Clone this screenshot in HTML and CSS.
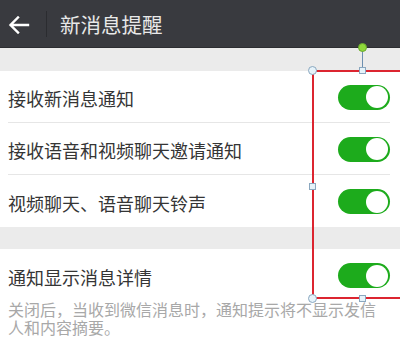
FILE: index.html
```html
<!DOCTYPE html>
<html lang="zh">
<head>
<meta charset="utf-8">
<link rel="stylesheet" href="styles.css">
</head>
<body>
<div class="page">
  <header class="topbar">
    <svg class="back" width="22" height="18" viewBox="0 0 22 18"><path d="M20 9H3M10 1.5L2.5 9l7.5 7.5" fill="none" stroke="#fff" stroke-width="2.4" stroke-linecap="square"/></svg>
    <span class="divider"></span>
    <span class="title">新消息提醒</span>
  </header>
  <div class="gap gap1"></div>
  <section class="group">
    <div class="row"><span class="label">接收新消息通知</span><span class="switch"><span class="knob"></span></span></div>
    <div class="row"><span class="label">接收语音和视频聊天邀请通知</span><span class="switch"><span class="knob"></span></span></div>
    <div class="row"><span class="label">视频聊天、语音聊天铃声</span><span class="switch"><span class="knob"></span></span></div>
  </section>
  <div class="gap gap2"></div>
  <section class="group">
    <div class="row"><span class="label">通知显示消息详情</span><span class="switch"><span class="knob"></span></span></div>
  </section>
  <p class="desc">关闭后，当收到微信消息时，通知提示将不显示发信人和内容摘要。</p>

  <div class="selection">
    <span class="rotate-line"></span>
    <span class="rotate"></span>
    <span class="h circle tl"></span>
    <span class="h circle bl"></span>
    <span class="h square tm"></span>
    <span class="h square bm"></span>
    <span class="h square ml"></span>
  </div>
</div>
</body>
</html>
```
FILE: styles.css
```css
html, body { margin: 0; padding: 0; }
body {
  width: 400px; height: 341px; overflow: hidden;
  background: #fff;
  font-family: "Noto Sans CJK SC", "Noto Sans", sans-serif;
}
.page { position: relative; width: 400px; height: 341px; overflow: hidden; }
.topbar {
  height: 48px; background: #393a3f;
  display: flex; align-items: center;
  border-bottom: 1px solid #2c2d31;
  box-sizing: border-box;
}
.back { margin-left: 8px; margin-top: 2px; }
.divider {
  width: 1px; height: 26px; background: #2b2c30;
  margin-left: 16px;
}
.title {
  margin-left: 13px; color: #e8e8e8; font-size: 20.5px; line-height: 1;
  margin-top: 1px;
}
.gap { background: #ebebeb; }
.gap1 { height: 23px; }
.gap2 { height: 22px; }
.group { background: #fff; }
.row {
  height: 52px; display: flex; align-items: center; justify-content: space-between;
  margin-left: 8px; margin-right: 10px;
  border-bottom: 1px solid #e6e6e6; box-sizing: border-box;
}
.group .row:last-child { border-bottom: none; }
.label { font-size: 18px; color: #353535; line-height: 1; margin-top: 3px; }
.switch {
  width: 52px; height: 25px; border-radius: 13px; background: #1dab1c;
  display: flex; align-items: center; justify-content: flex-end;
  padding-right: 2px; box-sizing: border-box; margin-top: 1px;
}
.knob { width: 22px; height: 22px; border-radius: 50%; background: #fff; }
.desc {
  margin: 0; padding: 0 8px; font-size: 16px; line-height: 17.5px; color: #a8a8a8;
  width: 380px;
}

.selection {
  position: absolute; left: 313px; top: 71px; width: 120px; height: 229px;
  border: 2px solid #dc2530; box-sizing: border-box;
  margin-left: -1px; margin-top: -1px;
}
.h { position: absolute; box-sizing: border-box; background: #e6f3fa; border: 1px solid #8aa7bf; }
.circle { width: 9px; height: 9px; border-radius: 50%; }
.square { width: 7px; height: 7px; }
.tl { left: -6px; top: -6px; }
.bl { left: -6px; bottom: -6px; }
.tm { left: 45px; top: -5px; }
.bm { left: 45px; bottom: -5px; }
.ml { left: -5px; top: 111px; }
.rotate-line { position: absolute; left: 48px; top: -24px; width: 1px; height: 20px; background: #6c8fb0; }
.rotate {
  position: absolute; left: 44px; top: -29px; width: 9px; height: 9px; border-radius: 50%;
  background: #8fd83a; border: 1px solid #6aa92d; box-sizing: border-box;
}
```
